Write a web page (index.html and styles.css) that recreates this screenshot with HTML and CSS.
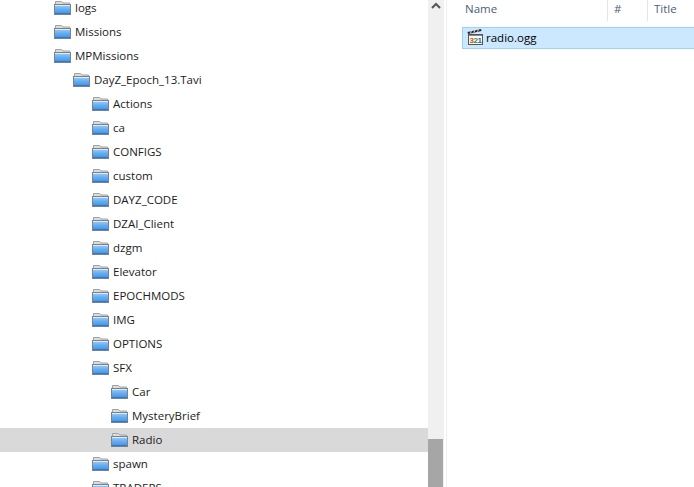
FILE: index.html
```html
<!DOCTYPE html>
<html lang="en">
<head>
<meta charset="utf-8">
<title>Explorer</title>
<link rel="stylesheet" href="styles.css">
</head>
<body>
<svg class="defs" width="0" height="0" aria-hidden="true">
  <defs>
    <linearGradient id="fb" x1="0" y1="0" x2="0" y2="1">
      <stop offset="0" stop-color="#a5d0f6"/>
      <stop offset=".45" stop-color="#69b0f0"/>
      <stop offset="1" stop-color="#3d8ee2"/>
    </linearGradient>
    <symbol id="folder" viewBox="0 0 17 15">
      <path d="M1.5 5V1.5H7.5L9 3H15.5V5z" fill="#dcdcdc" stroke="#a0a2a4"/>
      <rect x=".5" y="4.5" width="16" height="10" fill="url(#fb)" stroke="#77828e"/>
      <path d="M1 5.5h15" stroke="#dcecfa"/>
      <path d="M1 13.5h15" stroke="#2f78c8"/>
    </symbol>
  </defs>
</svg>
<main class="window">
  <nav class="tree">
    <div class="row d0"><svg class="ico"><use href="#folder"/></svg>logs</div>
    <div class="row d0"><svg class="ico"><use href="#folder"/></svg>Missions</div>
    <div class="row d0"><svg class="ico"><use href="#folder"/></svg>MPMissions</div>
    <div class="row d1"><svg class="ico"><use href="#folder"/></svg>DayZ_Epoch_13.Tavi</div>
    <div class="row d2"><svg class="ico"><use href="#folder"/></svg>Actions</div>
    <div class="row d2"><svg class="ico"><use href="#folder"/></svg>ca</div>
    <div class="row d2"><svg class="ico"><use href="#folder"/></svg>CONFIGS</div>
    <div class="row d2"><svg class="ico"><use href="#folder"/></svg>custom</div>
    <div class="row d2"><svg class="ico"><use href="#folder"/></svg>DAYZ_CODE</div>
    <div class="row d2"><svg class="ico"><use href="#folder"/></svg>DZAI_Client</div>
    <div class="row d2"><svg class="ico"><use href="#folder"/></svg>dzgm</div>
    <div class="row d2"><svg class="ico"><use href="#folder"/></svg>Elevator</div>
    <div class="row d2"><svg class="ico"><use href="#folder"/></svg>EPOCHMODS</div>
    <div class="row d2"><svg class="ico"><use href="#folder"/></svg>IMG</div>
    <div class="row d2"><svg class="ico"><use href="#folder"/></svg>OPTIONS</div>
    <div class="row d2"><svg class="ico"><use href="#folder"/></svg>SFX</div>
    <div class="row d3"><svg class="ico"><use href="#folder"/></svg>Car</div>
    <div class="row d3"><svg class="ico"><use href="#folder"/></svg>MysteryBrief</div>
    <div class="row d3 current"><svg class="ico"><use href="#folder"/></svg>Radio</div>
    <div class="row d2"><svg class="ico"><use href="#folder"/></svg>spawn</div>
    <div class="row d2"><svg class="ico"><use href="#folder"/></svg>TRADERS</div>
  </nav>
  <div class="scrollbar">
    <svg class="arrow" width="10" height="7" viewBox="0 0 10 7"><path d="M1 6l4-4 4 4" fill="none" stroke="#555" stroke-width="2"/></svg>
    <div class="thumb"></div>
  </div>
  <section class="files">
    <header class="head">
      <div class="col c-name">Name</div>
      <div class="col c-num">#</div>
      <div class="col c-title">Title</div>
    </header>
    <div class="file">
      <svg class="fico" width="16" height="16" viewBox="0 0 16 16">
        <rect x="1.5" y="5.5" width="14" height="10" fill="#fbfaf4" stroke="#555"/>
        <path d="M1 5L14.5 2 14 0 .5 3z" fill="#2a2a2a"/>
        <path d="M3.5 4.2l1-3M7 3.4l1-3M10.5 2.6l1-2.4" stroke="#ddd"/>
        <rect x="2" y="6" width="13" height="1" fill="#888"/>
        <text class="d-a" x="2.4" y="14">3</text>
        <text class="d-b" x="6.4" y="14">2</text>
        <text class="d-c" x="10.6" y="14">1</text>
      </svg>
      <span>radio.ogg</span>
    </div>
  </section>
</main>
</body>
</html>
```

FILE: styles.css
```css
html, body {
  margin: 0;
  height: 100%;
  overflow: hidden;
  background: #fff;
}
.defs { display: block; height: 0; }
.window {
  display: flex;
  height: 487px;
  font-family: "Open Sans", "Noto Sans", sans-serif;
  font-size: 11.5px;
  color: #1c1c1c;
  overflow: hidden;
}
.tree {
  width: 428px;
  flex: none;
  margin-top: -4px;
}
.row {
  height: 24px;
  box-sizing: border-box;
  padding-bottom: 2px;
  display: flex;
  align-items: center;
}
.d0 { padding-left: 54px; }
.d1 { padding-left: 73px; }
.d2 { padding-left: 92px; }
.d3 { padding-left: 111px; }
.current { background: #d9d9d9; }
.ico {
  width: 17px;
  height: 15px;
  margin-right: 4px;
  flex: none;
}
.scrollbar {
  width: 16px;
  flex: none;
  background: #f0f0f0;
  display: flex;
  flex-direction: column;
  align-items: center;
  justify-content: space-between;
  padding-top: 2px;
  box-sizing: border-box;
}
.arrow { flex: none; }
.thumb {
  width: 15px;
  height: 48px;
  margin-right: 1px;
  background: #a6a6a6;
}
.files {
  flex: 1;
  margin-left: 2px;
  border-left: 1px solid #f0f0f0;
  padding-left: 15px;
  min-width: 0;
}
.head {
  display: flex;
  height: 21px;
  color: #4c607a;
}
.col {
  box-sizing: border-box;
  padding-left: 3px;
  line-height: 18px;
  border-right: 1px solid #e5e5e5;
}
.c-name { width: 146px; }
.c-num { width: 40px; padding-left: 6px; }
.c-title { flex: 1; border-right: 0; padding-left: 6px; }
.file {
  margin-top: 6px;
  height: 22px;
  box-sizing: border-box;
  padding-bottom: 2px;
  display: flex;
  align-items: center;
  gap: 3px;
  padding-left: 4px;
  background: #cce8ff;
  border: 1px solid #99d1ff;
  border-right: 0;
  color: #000;
}
.fico { flex: none; }
.fico text {
  font-family: "Liberation Sans", sans-serif;
  font-size: 8px;
  font-weight: 700;
}
.fico .d-a { fill: #c8541f; }
.fico .d-b { fill: #2f8a3a; }
.fico .d-c { fill: #2c62b8; }
```
